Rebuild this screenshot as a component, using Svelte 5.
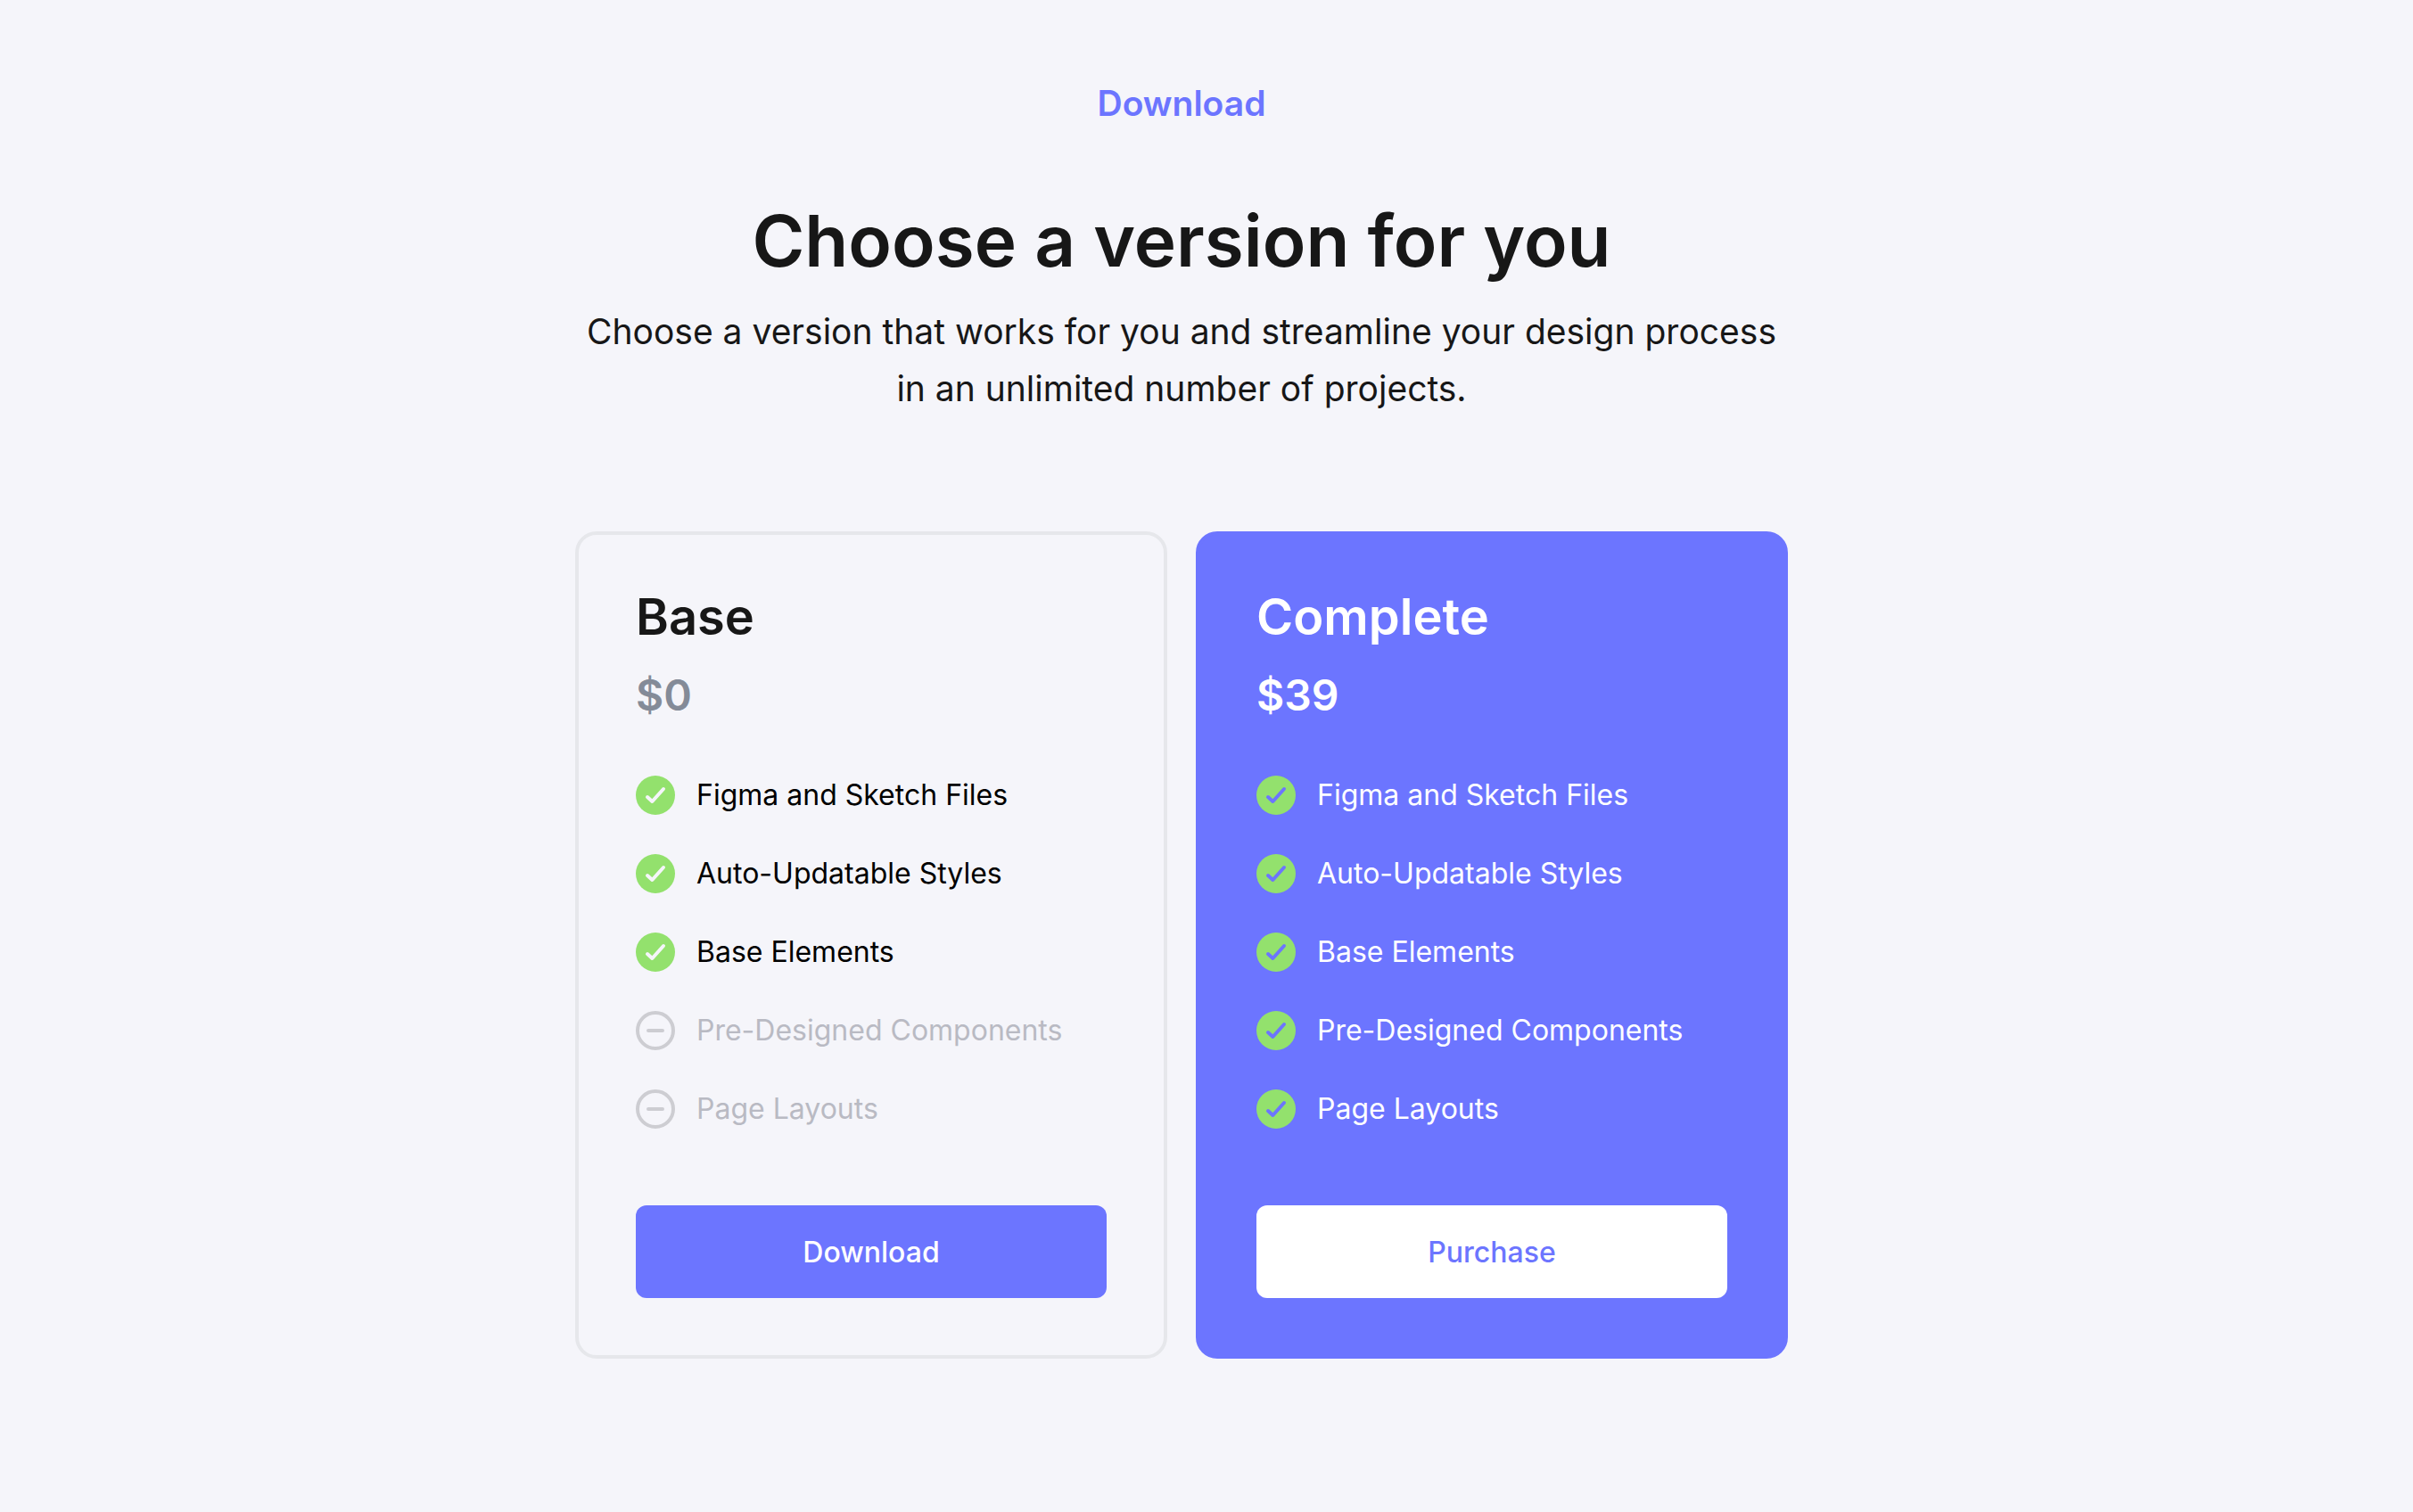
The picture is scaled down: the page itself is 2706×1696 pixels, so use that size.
<script>
  const features = [
    "Figma and Sketch Files",
    "Auto-Updatable Styles",
    "Base Elements",
    "Pre-Designed Components",
    "Page Layouts",
  ];

  const plans = [
    { name: "Base", price: "$0", action: "Download", included: 3, featured: false },
    { name: "Complete", price: "$39", action: "Purchase", included: 5, featured: true },
  ];
</script>

<main class="pricing">
  <header class="intro">
    <p class="eyebrow">Download</p>
    <h1>Choose a version for you</h1>
    <p class="lead">Choose a version that works for you and streamline your design process in an unlimited number of projects.</p>
  </header>

  <div class="plans">
    {#each plans as plan}
      <section class="plan" class:featured={plan.featured}>
        <h2>{plan.name}</h2>
        <p class="price">{plan.price}</p>

        <ul class="features">
          {#each features as feature, i}
            <li class:missing={i >= plan.included}>
              {#if i < plan.included}
                <svg class="icon" viewBox="0 0 44 44" aria-hidden="true">
                  <circle class="disc" cx="22" cy="22" r="22" />
                  <path class="tick" d="M13 24 L18.4 29 L31 15" />
                </svg>
              {:else}
                <svg class="icon" viewBox="0 0 44 44" aria-hidden="true">
                  <circle class="ring" cx="22" cy="22" r="20" />
                  <path class="ring" d="M14 22 H30" />
                </svg>
              {/if}
              <span>{feature}</span>
            </li>
          {/each}
        </ul>

        <button type="button">{plan.action}</button>
      </section>
    {/each}
  </div>
</main>

<style>
  :global(body) {
    background: #f5f5fa;
  }

  .pricing {
    --primary: #6c75ff;
    --page: #f5f5fa;
    --ink: #171717;
    display: flex;
    flex-direction: column;
    align-items: center;
    gap: 128px;
    padding: 84px 56px 172px 0;
    color: var(--ink);
    font-family: Inter, "Liberation Sans", sans-serif;
  }

  .intro {
    max-width: 1360px;
    text-align: center;
  }

  .eyebrow {
    margin: 0 0 68px;
    color: var(--primary);
    font-size: 39px;
    font-weight: 600;
    line-height: 64px;
  }

  h1 {
    margin: 0 0 16px;
    font-size: 80px;
    font-weight: 600;
    line-height: 108px;
  }

  .lead {
    margin: 0;
    font-size: 39px;
    line-height: 64px;
  }

  .plans {
    display: grid;
    grid-template-columns: 1fr 1fr;
    gap: 32px;
    width: 100%;
    max-width: 1360px;
  }

  .plan {
    --accent: var(--page);
    display: flex;
    flex-direction: column;
    padding: 64px;
    border: 4px solid #e6e7eb;
    border-radius: 24px;
  }

  h2 {
    margin: 0 0 32px;
    font-size: 56px;
    font-weight: 600;
    line-height: 56px;
  }

  .price {
    margin: 0 0 62px;
    color: #848b98;
    font-size: 48px;
    font-weight: 600;
    line-height: 56px;
  }

  .features {
    display: grid;
    gap: 44px;
    margin: 0 0 86px;
    padding: 0;
    color: #000;
    font-size: 32px;
    line-height: 44px;
    list-style: none;
  }

  li {
    display: flex;
    align-items: center;
    gap: 24px;
  }

  .missing {
    color: #b9bac3;
  }

  .icon {
    flex: none;
    width: 44px;
    height: 44px;
    fill: none;
    stroke-width: 4;
    stroke-linecap: round;
    stroke-linejoin: round;
  }

  .disc {
    fill: #93e16d;
  }

  .tick {
    stroke: var(--accent);
  }

  .ring {
    stroke: #cdcdd2;
  }

  button {
    height: 104px;
    border: 0;
    border-radius: 12px;
    background: var(--primary);
    color: #fff;
    font-family: inherit;
    font-size: 32px;
    font-weight: 500;
    cursor: pointer;
  }

  .featured {
    --accent: var(--primary);
    border-color: var(--primary);
    background: var(--primary);
    color: #fff;
  }

  .featured .price,
  .featured .features {
    color: #fff;
  }

  .featured button {
    background: #fff;
    color: var(--primary);
  }
</style>
